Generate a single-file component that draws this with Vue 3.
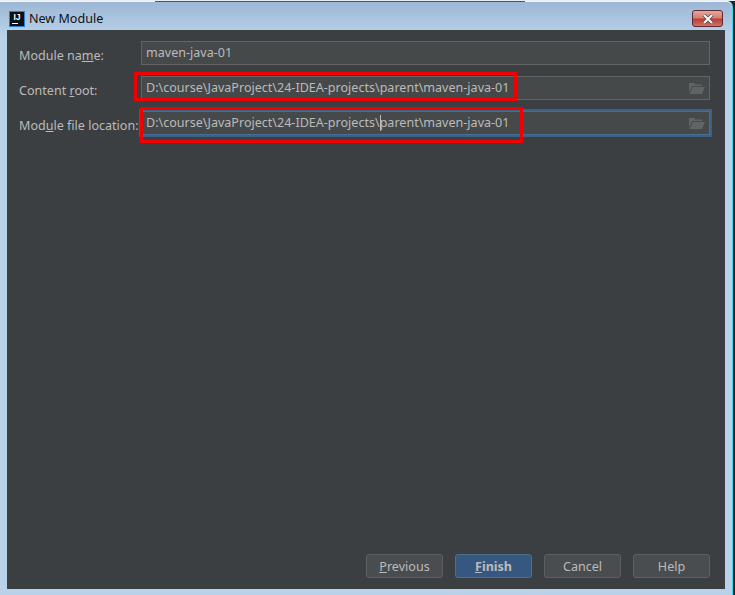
<script setup>
const path = 'D:\\course\\JavaProject\\24-IDEA-projects\\'
const tail = 'parent\\maven-java-01'
const fields = [
  { before: 'Module na', key: 'm', after: 'e:', value: 'maven-java-01' },
  { before: 'Content ', key: 'r', after: 'oot:', value: path + tail, browse: true, marked: true },
  { before: 'Mod', key: 'u', after: 'le file location:', value: path, tail, browse: true, focused: true, marked: true },
]
const buttons = [
  { key: 'P', rest: 'revious' },
  { key: 'F', rest: 'inish', primary: true },
  { rest: 'Cancel' },
  { rest: 'Help' },
]
</script>

<template>
  <div class="window">
    <span class="topline"></span>
    <header class="titlebar">
      <div class="app-icon"><span>IJ</span><i></i></div>
      <div class="title">New Module</div>
      <button class="close" aria-label="Close">
        <svg width="14" height="10" viewBox="0 0 14 10">
          <path d="M3 1 L11 9 M11 1 L3 9" stroke="#4a3a44" stroke-width="3.6" fill="none"/>
          <path d="M3 1 L11 9 M11 1 L3 9" stroke="#f2f2f2" stroke-width="2.4" fill="none"/>
        </svg>
      </button>
    </header>
    <main class="content">
      <section class="form">
        <div v-for="f in fields" :key="f.before" class="row">
          <label class="label">{{ f.before }}<u>{{ f.key }}</u>{{ f.after }}</label>
          <div class="field" :class="{ focused: f.focused }">
            <span class="value">{{ f.value }}<span v-if="f.tail" class="caret"></span>{{ f.tail }}</span>
            <svg v-if="f.browse" class="folder" width="16" height="13" viewBox="0 0 16 13">
              <path d="M0 1 H5 L6.5 2.5 H13 V4 H3 L0 11 Z" fill="#5f6566"/>
              <path d="M3.6 5 H16 L13 12 H0.6 Z" fill="#5f6566"/>
            </svg>
            <span v-if="f.marked" class="mark"></span>
          </div>
        </div>
      </section>
      <footer class="buttons">
        <button v-for="b in buttons" :key="b.rest" class="btn" :class="{ primary: b.primary }"><u v-if="b.key">{{ b.key }}</u>{{ b.rest }}</button>
      </footer>
    </main>
  </div>
</template>

<style>
html, body { margin: 0; background: linear-gradient(180deg, #e8eef4 1px, #1d2529 1px); overflow: hidden; }
</style>

<style scoped>
.window {
  width: 733px;
  height: 594px;
  box-sizing: border-box;
  margin-top: 1px;
  padding: 0 0 6px 7px;
  display: flex;
  flex-direction: column;
  position: relative;
  background: linear-gradient(180deg, #9cb6d4 0, #b9d2ea 34px);
  border-right: 1px solid #3fd6ee;
  border-top-right-radius: 6px;
  box-shadow: inset 0 1px 0 #f4f7fa;
  font-family: "Noto Sans", "Open Sans", sans-serif;
  font-size: 12.55px;
}
.topline {
  position: absolute;
  left: 155px;
  top: 0;
  width: 370px;
  height: 1px;
  background: #2f5f86;
}
.titlebar {
  height: 29px;
  display: flex;
  align-items: center;
  flex: none;
  position: relative;
  padding-top: 6px;
  box-sizing: border-box;
}
.app-icon {
  width: 14px;
  height: 14px;
  margin-left: 3px;
  background: #0c0f13;
  outline: 1px solid #2b7fd0;
  color: #fff;
  position: relative;
  font: bold 8.5px/10px "Liberation Sans", sans-serif;
  text-align: center;
}
.app-icon i {
  position: absolute;
  left: 2px;
  bottom: 2px;
  width: 6px;
  height: 1px;
  background: #fff;
}
.title {
  margin-left: 5px;
  color: #111;
}
.close {
  position: absolute;
  right: 9px;
  top: 9px;
  width: 31px;
  height: 17px;
  padding: 0;
  border: 1px solid #5b2a33;
  border-radius: 3px;
  background: linear-gradient(180deg, #e5a79d 0, #d67f72 45%, #b93f30 55%, #cf7467 100%);
  display: flex;
  align-items: center;
  justify-content: center;
}
.content {
  flex: 1;
  margin-right: 7px;
  background: #3c3f41;
  display: flex;
  flex-direction: column;
  justify-content: space-between;
  padding: 11px 15px 11px 12px;
}
.form {
  display: flex;
  flex-direction: column;
  gap: 11px;
}
.row {
  display: flex;
  align-items: center;
  height: 24px;
}
.label {
  width: 122px;
  flex: none;
  color: #bbbbbb;
  white-space: nowrap;
  padding-top: 4px;
}
.field {
  flex: 1;
  height: 24px;
  box-sizing: border-box;
  border: 1px solid #646464;
  background: #45494a;
  color: #bbbbbb;
  display: flex;
  align-items: center;
  justify-content: space-between;
  padding: 0 4px;
  position: relative;
}
.field.focused {
  outline: 2px solid #3d6185;
  border-color: #466d94;
}
.value { white-space: nowrap; position: relative; top: -1px; }
.caret {
  display: inline-block;
  width: 1px;
  height: 16px;
  margin-right: -1px;
  background: #bbbbbb;
  vertical-align: -4px;
}
.folder { flex: none; }
.mark {
  position: absolute;
  left: -8px;
  top: -5px;
  width: 377px;
  height: 23px;
  border: 3px solid #f00000;
  pointer-events: none;
}
.focused .mark {
  left: -2px;
  top: -5px;
  height: 30px;
}
.buttons {
  display: flex;
  justify-content: flex-end;
  gap: 12px;
}
.btn {
  width: 77px;
  height: 24px;
  box-sizing: border-box;
  border: 1px solid #5e6060;
  border-radius: 3px;
  background: #4a4d4f;
  color: #bbbbbb;
  font: inherit;
  padding: 0;
}
.btn.primary {
  background: #365880;
  border-color: #4c708c;
  font-weight: 700;
}
</style>
